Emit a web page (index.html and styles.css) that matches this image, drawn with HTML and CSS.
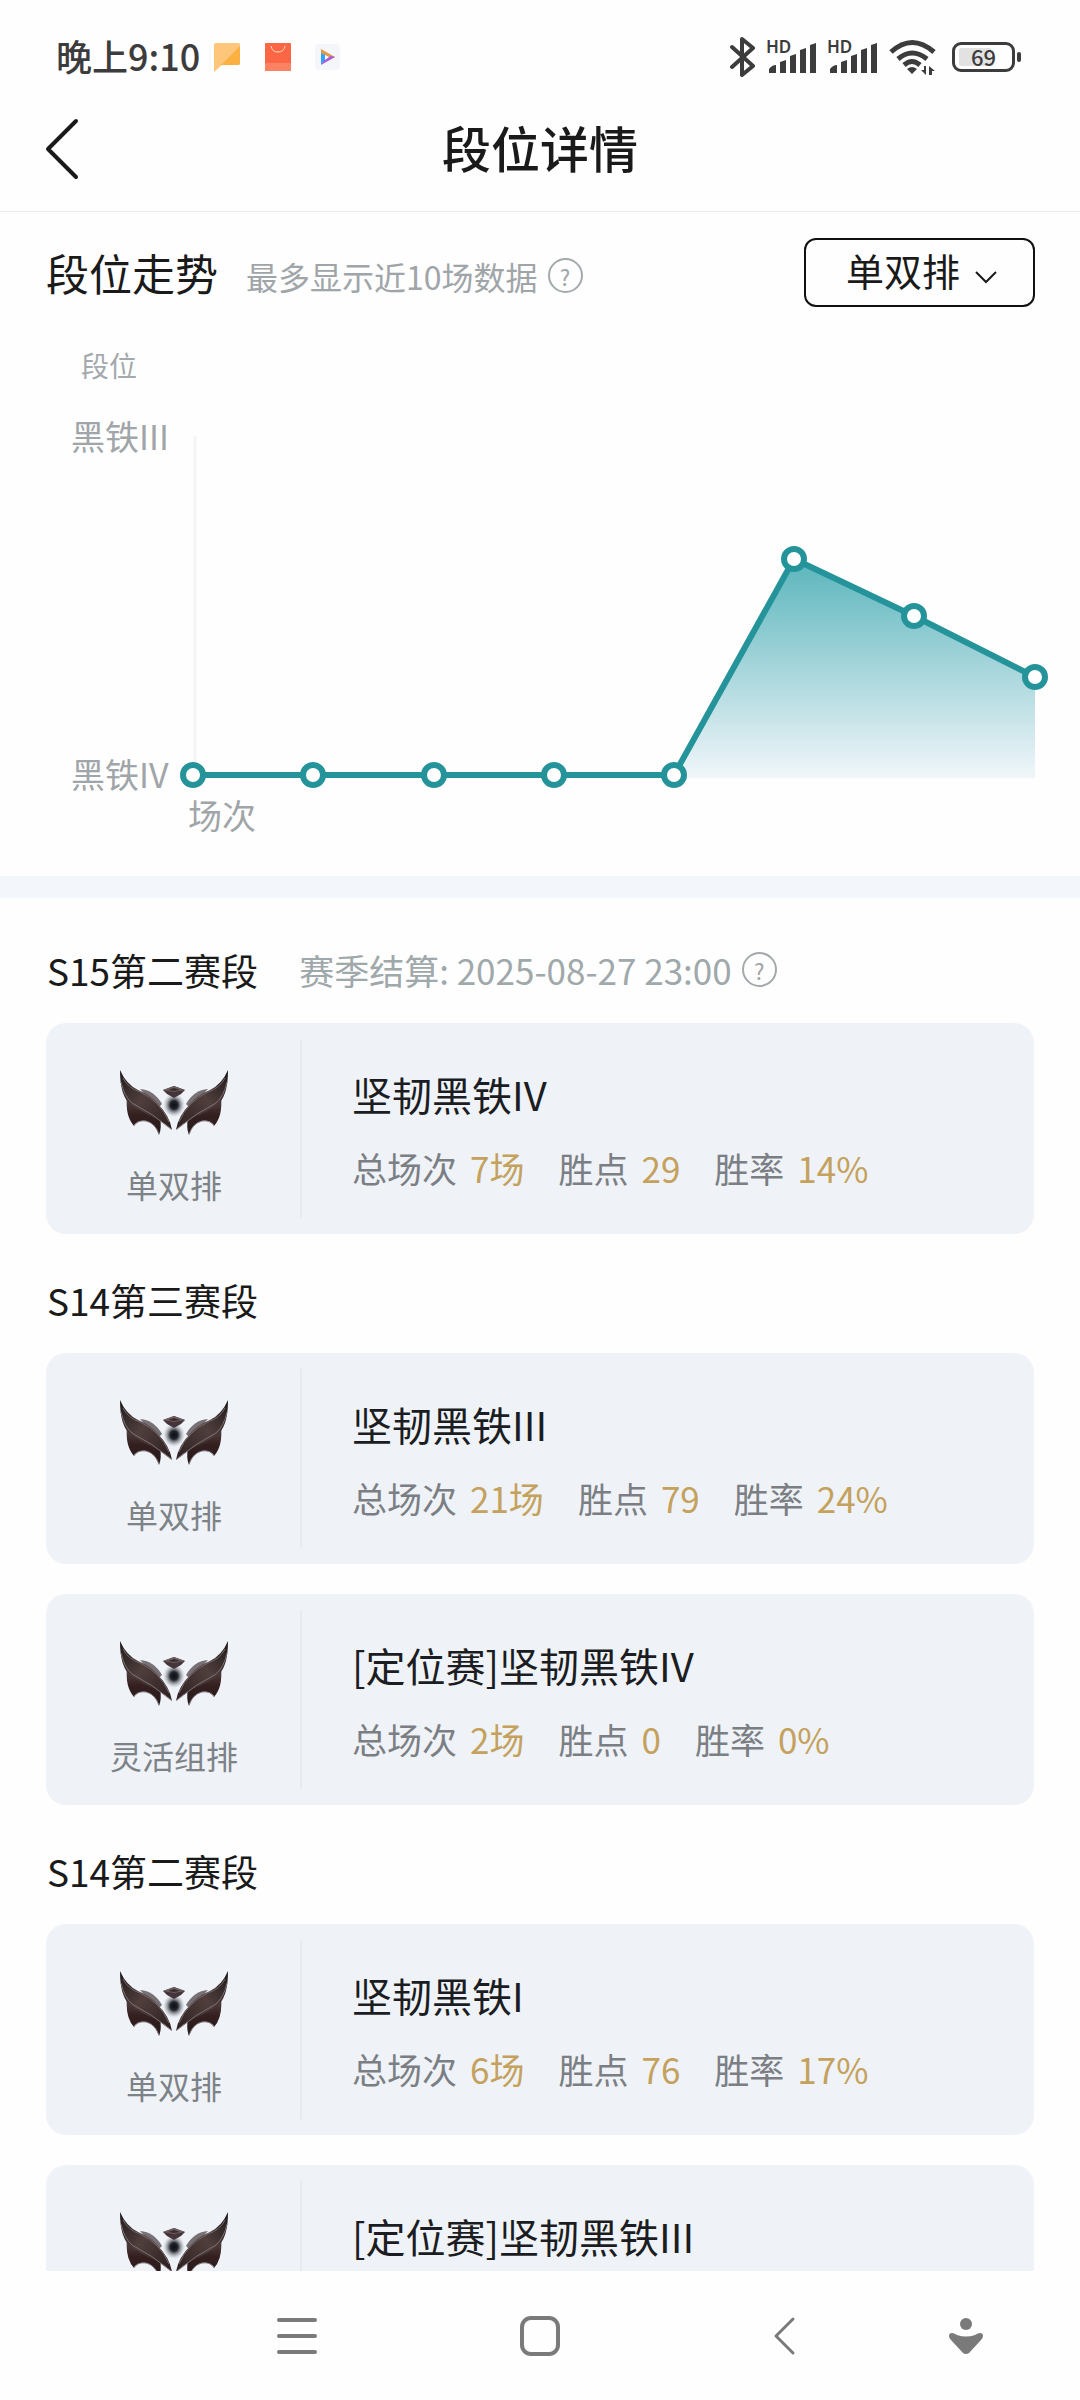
FILE: index.html
```html
<!DOCTYPE html>
<html lang="zh-CN">
<head>
<meta charset="utf-8">
<meta name="viewport" content="width=device-width, initial-scale=1">
<title>段位详情</title>
<link rel="stylesheet" href="styles.css">
</head>
<body>
<svg class="defs" aria-hidden="true">
  <defs>
    <linearGradient id="wing" x1="0" y1="0" x2="1" y2="1">
      <stop offset="0" stop-color="#1f1a1c"/>
      <stop offset=".45" stop-color="#4f3e3c"/>
      <stop offset="1" stop-color="#2c1f20"/>
    </linearGradient>
    <linearGradient id="under" x1="0" y1="0" x2="0" y2="1">
      <stop offset="0" stop-color="#5c5053"/>
      <stop offset=".5" stop-color="#351f1f"/>
      <stop offset="1" stop-color="#241a1c"/>
    </linearGradient>
    <radialGradient id="gem">
      <stop offset="0" stop-color="#0c0e14"/>
      <stop offset=".35" stop-color="#23252c"/>
      <stop offset="1" stop-color="#a9adb6" stop-opacity="0"/>
    </radialGradient>
    <symbol id="half-wing" viewBox="0 0 54 66" overflow="visible">
      <path d="M7 26 Q5 46 14 56 Q18 50 26 51 Q35 53 39 65 Q42 58 40 48 L30 24 Z" fill="url(#under)"/>
      <path d="M14 55 Q18 50 26 51 Q35 53 39 64" fill="none" stroke="#8a8083" stroke-width="1"/>
      <path d="M20 19 Q34 20 42 34 L38 38 Z" fill="#777074"/>
      <path d="M0 0 Q0 23 8 32 Q22 43 35 48 Q45 53 52 60 Q50 46 37 33 Q30 25 18 20 Q6 14 0 0 Z" fill="url(#wing)"/>
      <path d="M1 12 Q4 26 12 33 Q32 43 51 59" fill="none" stroke="#7d7173" stroke-width="1"/>
      <path d="M3 8 Q8 18 20 22 Q40 31 49 52" fill="none" stroke="#75686a" stroke-width="1"/>
    </symbol>
    <symbol id="emblem" viewBox="0 0 108 66">
      <ellipse cx="54" cy="35" rx="11" ry="12" fill="url(#gem)"/>
      <use href="#half-wing" width="54" height="66"/>
      <use href="#half-wing" width="54" height="66" transform="matrix(-1 0 0 1 108 0)"/>
      <path d="M43 20 L54 16 L65 20 L61 24 L54 28 L47 24 Z" fill="#45353a"/>
      <path d="M43 20 L54 16 L65 20 L54 22 Z" fill="#6d5f61"/>
      <path d="M48 20 L54 18 L60 20 L54 21 Z" fill="#3a2b2d"/>
    </symbol>
    <symbol id="signal" viewBox="0 0 50 32">
      <path d="M2 32v-4q3-4 7-4v8zM13 32V21l6-2v13zM23 32V15l6-2v19zM33 32V9l6-2v25zM43 32V4l6-2v30z" fill="#3c3c3c"/>
    </symbol>
  </defs>
</svg>

<div class="app">
  <div class="status">
    <span class="clock">晚上9:10</span>
    <svg class="app-icon" width="28" height="30" viewBox="0 0 28 30">
      <path d="M1 3q0-2 2-2h22q2 0 2 2v18q0 2-2 2H9l-8 7z" fill="#fdc67a"/>
      <path d="M27 4v17q0 2-2 2H8z" fill="#fbb042"/>
    </svg>
    <svg class="app-icon" width="28" height="30" viewBox="0 0 28 30">
      <rect x="1" y="1" width="26" height="28" rx="1" fill="#fb6644"/>
      <path d="M1 21h26v7q0 1-1 1H2q-1 0-1-1z" fill="#fd8263"/>
      <path d="M7 4q1 6 7 6t7-6" fill="none" stroke="#ffd9c4" stroke-width="1"/>
    </svg>
    <svg class="app-icon" width="26" height="30" viewBox="0 0 26 30">
      <rect x="0" y="2" width="25" height="26" rx="4" fill="#f5f6f9"/>
      <path d="M6 7l14 8-4 2-10-5z" fill="#e09a4a"/>
      <path d="M6 11l4 2v5l-4 5z" fill="#2fa6f8"/>
      <path d="M20 15L6 23l4-6 6-3z" fill="#a85be0"/>
      <path d="M10 13l4 2-4 3z" fill="#fff"/>
    </svg>
    <div class="status-right">
      <svg width="26" height="40" viewBox="0 0 26 40">
        <path d="M2 10l21 19-11 9V2l11 9L2 30" fill="none" stroke="#3c3c3c" stroke-width="4" stroke-linejoin="round" stroke-linecap="round"/>
      </svg>
      <div class="sim"><span class="hd">HD</span><svg width="50" height="32"><use href="#signal"/></svg></div>
      <div class="sim"><span class="hd">HD</span><svg width="50" height="32"><use href="#signal"/></svg></div>
      <svg class="wifi" width="48" height="36" viewBox="0 0 48 36">
        <g fill="none" stroke="#3c3c3c" stroke-width="5">
          <path d="M2 13Q23-6 45 13"/>
          <path d="M9 20q14-12 29 0"/>
          <path d="M15 26q8-7 16 0"/>
        </g>
        <path d="M23 35l-5-5q5-4 10 0z" fill="#3c3c3c"/>
        <path d="M37 27v9l-5-5h3v-4zM40 36v-9l6 5h-3v4z" fill="#3c3c3c"/>
      </svg>
      <div class="battery"><span class="battery-level">69</span></div>
    </div>
  </div>

  <header class="topbar">
    <button class="back" type="button" aria-label="返回">
      <svg width="34" height="62" viewBox="0 0 34 62"><path d="M31 3L3 31l28 28" fill="none" stroke="#1a1a1a" stroke-width="4" stroke-linecap="round" stroke-linejoin="round"/></svg>
    </button>
    <h1 class="title">段位详情</h1>
  </header>

  <main class="content">
    <section class="trend">
      <div class="trend-head">
        <h2 class="trend-title">段位走势</h2>
        <div class="note">
          <span class="hint">最多显示近10场数据</span>
          <button class="help" type="button" aria-label="说明">?</button>
        </div>
        <div class="picker">
          <select class="picker-select" aria-label="排位类型">
            <option>单双排</option>
            <option>灵活组排</option>
          </select>
          <svg class="picker-arrow" width="22" height="14" viewBox="0 0 22 14"><path d="M1 2l10 10L21 2" fill="none" stroke="#1a1a1a" stroke-width="2"/></svg>
        </div>
      </div>
      <div class="axis-name">段位</div>
      <div class="chart">
        <div class="y-labels"><span>黑铁III</span><span>黑铁IV</span></div>
        <svg class="plot" viewBox="0 0 842 346">
          <defs>
            <linearGradient id="area" x1="0" y1="0" x2="0" y2="1">
              <stop offset="0" stop-color="#5ab5bc"/>
              <stop offset="1" stop-color="#f1f6fa"/>
            </linearGradient>
          </defs>
          <path d="M2 3V342" stroke="#f4f4f6" stroke-width="3"/>
          <path d="M481 345V342L601 126l120 57 121 61V345z" fill="url(#area)"/>
          <path d="M0 342H481L601 126l120 57 121 61" fill="none" stroke="#24939a" stroke-width="6" stroke-linejoin="round"/>
          <g fill="#fff" stroke="#24939a" stroke-width="6">
            <circle cx="0" cy="342" r="10"/><circle cx="120" cy="342" r="10"/><circle cx="241" cy="342" r="10"/><circle cx="361" cy="342" r="10"/>
            <circle cx="481" cy="342" r="10"/><circle cx="601" cy="126" r="10"/><circle cx="721" cy="183" r="10"/><circle cx="842" cy="244" r="10"/>
          </g>
        </svg>
        <div class="x-name">场次</div>
      </div>
    </section>

    <div class="seasons">
      <section class="season">
        <div class="season-head">
          <h2 class="season-title">S15第二赛段</h2>
          <span class="settle">赛季结算: 2025-08-27 23:00</span>
          <button class="help" type="button" aria-label="说明">?</button>
        </div>
        <article class="card">
          <div class="queue"><svg class="emblem" width="108" height="66"><use href="#emblem"/></svg><span>单双排</span></div>
          <div class="info">
            <h3 class="rank">坚韧黑铁IV</h3>
            <dl class="stats"><div><dt>总场次</dt><dd>7场</dd></div><div><dt>胜点</dt><dd>29</dd></div><div><dt>胜率</dt><dd>14%</dd></div></dl>
          </div>
        </article>
      </section>

      <section class="season">
        <div class="season-head"><h2 class="season-title">S14第三赛段</h2></div>
        <article class="card">
          <div class="queue"><svg class="emblem" width="108" height="66"><use href="#emblem"/></svg><span>单双排</span></div>
          <div class="info">
            <h3 class="rank">坚韧黑铁III</h3>
            <dl class="stats"><div><dt>总场次</dt><dd>21场</dd></div><div><dt>胜点</dt><dd>79</dd></div><div><dt>胜率</dt><dd>24%</dd></div></dl>
          </div>
        </article>
        <article class="card">
          <div class="queue"><svg class="emblem" width="108" height="66"><use href="#emblem"/></svg><span>灵活组排</span></div>
          <div class="info">
            <h3 class="rank">[定位赛]坚韧黑铁IV</h3>
            <dl class="stats"><div><dt>总场次</dt><dd>2场</dd></div><div><dt>胜点</dt><dd>0</dd></div><div><dt>胜率</dt><dd>0%</dd></div></dl>
          </div>
        </article>
      </section>

      <section class="season">
        <div class="season-head"><h2 class="season-title">S14第二赛段</h2></div>
        <article class="card">
          <div class="queue"><svg class="emblem" width="108" height="66"><use href="#emblem"/></svg><span>单双排</span></div>
          <div class="info">
            <h3 class="rank">坚韧黑铁I</h3>
            <dl class="stats"><div><dt>总场次</dt><dd>6场</dd></div><div><dt>胜点</dt><dd>76</dd></div><div><dt>胜率</dt><dd>17%</dd></div></dl>
          </div>
        </article>
        <article class="card">
          <div class="queue"><svg class="emblem" width="108" height="66"><use href="#emblem"/></svg></div>
          <div class="info">
            <h3 class="rank">[定位赛]坚韧黑铁III</h3>
          </div>
        </article>
      </section>
    </div>
  </main>

  <nav class="sysnav" aria-label="系统导航">
    <button type="button" aria-label="最近任务"><svg width="40" height="40" viewBox="0 0 40 40"><path d="M2 4h36M2 20h36M2 36h36" stroke="#7a7a7a" stroke-width="4" stroke-linecap="round"/></svg></button>
    <button type="button" aria-label="主屏幕"><svg width="40" height="40" viewBox="0 0 40 40"><rect x="2" y="2" width="36" height="36" rx="9" fill="none" stroke="#7a7a7a" stroke-width="4"/></svg></button>
    <button type="button" aria-label="后退"><svg width="24" height="40" viewBox="0 0 24 40"><path d="M21 3L4 20l17 17" fill="none" stroke="#7a7a7a" stroke-width="3" stroke-linecap="round" stroke-linejoin="round"/></svg></button>
    <button type="button" aria-label="无障碍"><svg width="36" height="40" viewBox="0 0 36 40"><circle cx="18" cy="8" r="6" fill="#7a7a7a"/><path d="M4 17q2 0 5 2 9 3 18 0 3-2 5-2 3 0 3 3 0 2-2 4L21 37q-3 2-6 0L3 24q-2-2-2-4 0-3 3-3z" fill="#7a7a7a"/></svg></button>
  </nav>
</div>
</body>
</html>
```
FILE: styles.css
```css
* { box-sizing: border-box; }
body, h1, h2, h3, dl, dd { margin: 0; }
body {
  font-family: "Noto Sans CJK SC", sans-serif;
  color: #1a1a1a;
  background: #fefefe;
}
h1, h2, h3 { font-weight: 400; }
button {
  padding: 0;
  border: 0;
  background: none;
  font: inherit;
  color: inherit;
}
svg { display: block; }
.defs { position: absolute; width: 0; height: 0; }

.app {
  display: flex;
  flex-direction: column;
  height: 100vh;
}

/* Status bar */
.status {
  display: flex;
  align-items: center;
  height: 114px;
  padding: 0 58px 0 56px;
  color: #3c3c3c;
}
.clock {
  padding-bottom: 4px;
  font-size: 36px;
  font-weight: 500;
  line-height: 40px;
}
.app-icon { margin-left: 13px; }
.app-icon + .app-icon { margin-left: 23px; }
.status-right {
  display: flex;
  align-items: center;
  gap: 11px;
  margin-left: auto;
}
.sim {
  position: relative;
  width: 50px;
  height: 32px;
}
.hd {
  position: absolute;
  left: -1px;
  top: -1px;
  font: 600 17px/14px "Noto Sans", sans-serif;
}
.battery {
  position: relative;
  width: 63px;
  height: 30px;
  margin: 0 7px 0 4px;
  padding: 3px 4px;
  border: 3px solid #3c3c3c;
  border-radius: 9px;
}
.battery::after {
  content: "";
  position: absolute;
  right: -9px;
  top: 7px;
  width: 4px;
  height: 10px;
  border-radius: 2px;
  background: #3c3c3c;
}
.battery-level {
  display: block;
  height: 18px;
  border-radius: 2px;
  background: linear-gradient(90deg, #e2e2e2 65%, transparent 65%);
  font: 500 22px/16px "Noto Sans CJK SC", sans-serif;
  text-align: center;
}

/* Title bar */
.topbar {
  display: grid;
  grid-template-columns: 1fr auto 1fr;
  align-items: center;
  height: 98px;
  padding: 0 45px 28px;
  border-bottom: 1px solid #ececec;
}
.back { justify-self: start; }
.title {
  padding-bottom: 4px;
  font-size: 49px;
  font-weight: 500;
  line-height: 60px;
}

.content {
  flex: 1;
  min-height: 0;
  overflow-y: auto;
  scrollbar-width: none;
}

/* Trend chart */
.trend {
  padding: 26px 45px 38px 46px;
  border-bottom: 22px solid #f3f6fb;
}
.trend-head { display: flex; align-items: center; }
.trend-title {
  padding-bottom: 2px;
  font-size: 43px;
  line-height: 60px;
}
.note {
  display: flex;
  align-items: center;
  margin-left: 28px;
  padding-top: 6px;
}
.hint {
  font-size: 32px;
  line-height: 48px;
  color: #9fa5a8;
}
.help {
  width: 35px;
  height: 35px;
  margin-left: 10px;
  border: 2px solid #a3aaac;
  border-radius: 50%;
  font-size: 22px;
  line-height: 32px;
  color: #9fa5a8;
}
.picker {
  position: relative;
  margin-left: auto;
}
.picker-select {
  appearance: none;
  display: block;
  width: 231px;
  height: 69px;
  padding: 0 0 6px 40px;
  border: 2px solid #111;
  border-radius: 12px;
  background: #fefefe;
  font: inherit;
  font-size: 38px;
  color: #1a1a1a;
}
.picker-arrow {
  position: absolute;
  right: 38px;
  top: 32px;
  pointer-events: none;
}
.axis-name {
  margin: 38px 0 0 35px;
  font-size: 28px;
  line-height: 40px;
  color: #a3a9ad;
}
.chart {
  display: grid;
  grid-template-columns: 147px 1fr;
  margin-top: 28px;
  font-size: 34px;
  line-height: 46px;
  color: #9fa5a8;
}
.y-labels {
  display: flex;
  flex-direction: column;
  justify-content: space-between;
  padding-left: 25px;
  white-space: nowrap;
}
.plot {
  width: 100%;
  padding-top: 20px;
  margin-bottom: 18px;
  overflow: visible;
  box-sizing: content-box;
}
.x-name {
  grid-column: 2;
  margin: -5px 0 0 -5px;
}

/* Season list */
.seasons { padding: 45px 46px; }
.season + .season { margin-top: 39px; }
.season-head {
  display: flex;
  align-items: center;
  height: 56px;
  margin-bottom: 24px;
  padding: 0 0 3px 1px;
}
.season-title { font-size: 37px; }
.settle {
  margin-left: 41px;
  font-size: 35px;
  color: #9fa8aa;
}
.card {
  display: grid;
  grid-template-columns: 256px 1fr;
  align-items: center;
  height: 211px;
  border-radius: 20px;
  background: #eff3f8;
}
.card + .card { margin-top: 30px; }
.queue {
  display: flex;
  flex-direction: column;
  align-items: center;
  gap: 26px;
  height: 179px;
  padding: 31px 0 0 2px;
  border-right: 2px solid #e7ebf1;
  font-size: 32px;
  line-height: 44px;
  color: #7d8287;
}
.info {
  align-self: start;
  padding: 41px 0 0 50px;
}
.rank {
  font-size: 40px;
  line-height: 60px;
  color: #1b1d22;
}
.stats {
  display: flex;
  gap: 34px;
  margin-top: 21px;
  font-size: 35px;
  line-height: 46px;
}
.stats div { display: flex; gap: 13px; }
.stats dt { color: #7b7f84; }
.stats dd { color: #c4a15c; }

/* System navigation */
.sysnav {
  display: grid;
  grid-template-columns: 2fr 2fr 2fr 1fr;
  height: 129px;
  padding: 0 53px 0 175px;
  background: #fefefe;
}
.sysnav button { display: grid; place-items: center; }
```
